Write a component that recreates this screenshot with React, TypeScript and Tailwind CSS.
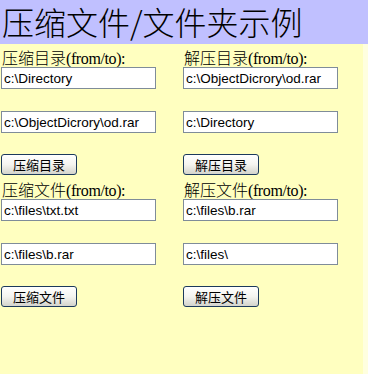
import React from 'react';

type Block = {
  label: string;
  from: string;
  to: string;
  action: string;
};

const sections: Block[][] = [
  [
    { label: '压缩目录', from: 'c:\\Directory', to: 'c:\\ObjectDicrory\\od.rar', action: '压缩目录' },
    { label: '解压目录', from: 'c:\\ObjectDicrory\\od.rar', to: 'c:\\Directory', action: '解压目录' },
  ],
  [
    { label: '压缩文件', from: 'c:\\files\\txt.txt', to: 'c:\\files\\b.rar', action: '压缩文件' },
    { label: '解压文件', from: 'c:\\files\\b.rar', to: 'c:\\files\\', action: '解压文件' },
  ],
];

const PathBox = ({ value }: { value: string }) => (
  <input
    readOnly
    value={value}
    className="font-['Liberation_Sans',sans-serif] block w-[155px] h-[22px] border border-[#7f8c99] bg-white px-[2px] text-[13.5px] text-black outline-none"
  />
);

const Column = ({ block }: { block: Block }) => (
  <div className="flex flex-col">
    <div className="font-['Liberation_Serif',serif] h-[23px] pt-[4px] pl-[2px] text-[16px] leading-[18px] text-black whitespace-nowrap">
      <span className="font-['Noto_Sans_CJK_SC',sans-serif] font-light">{block.label}</span>
      <span className="tracking-[-0.4px]">(from/to):</span>
    </div>
    <div className="pl-[1px]">
      <PathBox value={block.from} />
    </div>
    <div className="pl-[1px] mt-[22px]">
      <PathBox value={block.to} />
    </div>
    <div className="pl-[1px] mt-[19px]">
      <button className="font-['Noto_Sans_CJK_SC',sans-serif] w-[76px] h-[21px] rounded-[3px] border border-[#1c3a5c] bg-gradient-to-b from-white via-[#f4f4f0] to-[#d4d4cc] text-[13px] leading-[19px] text-black">
        {block.action}
      </button>
    </div>
  </div>
);

export default function App() {
  return (
    <div className="w-[368px] h-[374px] flex flex-col bg-[#ffffdf] overflow-hidden">
      <div className="font-['Noto_Sans_CJK_SC',sans-serif] h-[44px] bg-[#c0c0ff] pl-[2px] text-[32px] leading-[42px] font-light text-black whitespace-nowrap">
        压缩文件/文件夹示例
      </div>
      <div className="w-[363px] flex-1 bg-[#ffffc0]">
        {sections.map((pair, i) => (
          <div key={i} className="grid grid-cols-[182px_181px]">
            {pair.map((b) => (
              <Column key={b.label} block={b} />
            ))}
          </div>
        ))}
      </div>
    </div>
  );
}
